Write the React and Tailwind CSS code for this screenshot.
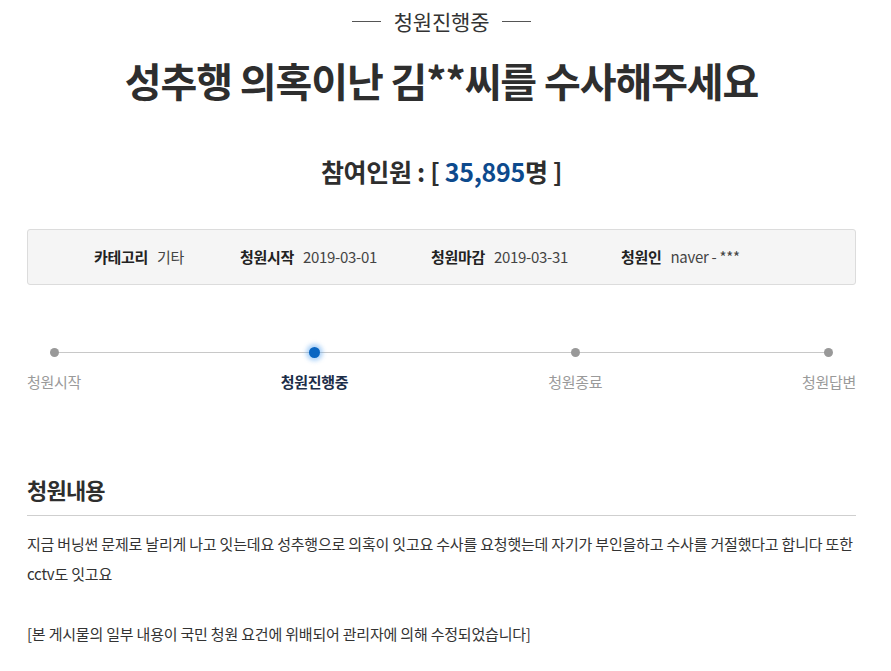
import React from "react";

const info = [
  { label: "카테고리", value: "기타", w: "w-[146px]" },
  { label: "청원시작", value: "2019-03-01", w: "w-[191px]" },
  { label: "청원마감", value: "2019-03-31", w: "w-[190px]" },
  { label: "청원인", value: "naver - ***", w: "" },
];

const steps = [
  { name: "청원시작", active: false },
  { name: "청원진행중", active: true },
  { name: "청원종료", active: false },
  { name: "청원답변", active: false },
];

export default function App() {
  return (
    <div
      className="min-h-screen w-[891px] bg-white text-[#333] pl-[27px] pr-[35px]"
      style={{ fontFamily: '"Noto Sans CJK KR", "Noto Sans", sans-serif' }}
    >
      {/* status */}
      <div className="flex items-center justify-center h-[42px] pt-[1px]">
        <span className="block w-[29px] h-px bg-[#555]" />
        <span className="mx-[13px] text-[21px] tracking-[-0.2px] text-[#333]">청원진행중</span>
        <span className="block w-[29px] h-px bg-[#555]" />
      </div>

      <h1 className="text-center text-[40px] font-bold tracking-[-1.1px] leading-[76px] text-[#2e2e2e]">
        성추행 의혹이난 김**씨를 수사해주세요
      </h1>

      <div className="mt-[33px] text-center text-[25px] font-bold tracking-[-0.3px] leading-[40px] text-[#2e2e2e]">
        참여인원 : [ <span className="text-[#0d4a8d]">35,895</span>명 ]
      </div>

      {/* info box */}
      <div className="mt-[38px] h-[56px] flex items-center pl-[66px] bg-[#f5f5f5] border border-[#dcdcdc] rounded-[3px] text-[15px] tracking-[-0.3px]">
        {info.map((it) => (
          <div key={it.label} className={`flex items-center ${it.w}`}>
            <span className="font-bold text-[#222]">{it.label}</span>
            <span className="ml-[9px] text-[#444]">{it.value}</span>
          </div>
        ))}
      </div>

      {/* progress */}
      <div className="relative mt-[62px]">
        <div className="absolute left-[26px] right-[27px] top-[5px] h-px bg-[#c8c8c8]" />
        <div className="relative flex justify-between">
          {steps.map((s) => (
            <div key={s.name} className="flex flex-col items-center">
              <div className="h-[11px] flex items-center justify-center">
                {s.active ? (
                  <span className="block w-[11px] h-[11px] rounded-full bg-[#0a66c2] shadow-[0_0_4px_3px_rgba(80,160,240,0.45)]" />
                ) : (
                  <span className="block w-[9px] h-[9px] rounded-full bg-[#999]" />
                )}
              </div>
              <span
                className={`mt-[14px] text-[15px] tracking-[-0.3px] leading-[20px] ${
                  s.active ? "font-bold text-[#1c2d48]" : "text-[#9a9a9a]"
                }`}
              >
                {s.name}
              </span>
            </div>
          ))}
        </div>
      </div>

      {/* content */}
      <h2 className="mt-[82px] text-[22px] font-bold tracking-[-0.8px] leading-[30px] text-[#2e2e2e]">청원내용</h2>
      <div className="mt-[11px] h-px bg-[#cfcfcf]" />
      <p className="mt-[13px] text-[15px] tracking-[-0.2px] leading-[30px] text-[#333]">
        지금 버닝썬 문제로 날리게 나고 잇는데요 성추행으로 의혹이 잇고요 수사를 요청햇는데 자기가 부인을하고 수사를 거절했다고 합니다 또한 cctv도 잇고요
        <br />
        <br />
        [본 게시물의 일부 내용이 국민 청원 요건에 위배되어 관리자에 의해 수정되었습니다]
      </p>
    </div>
  );
}
